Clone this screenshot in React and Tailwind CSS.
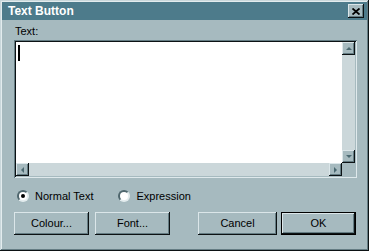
import React from "react";

const raised =
  "shadow-[inset_-1px_-1px_#0c1214,inset_1px_1px_#dbe6e9,inset_-2px_-2px_#647c83]";

function Btn({ w, children, def }) {
  if (def) {
    return (
      <div className={`${w} h-[23px] border border-black p-0`}>
        <div
          className={`w-full h-full flex items-center justify-center bg-[#a6babf] ${raised}`}
        >
          {children}
        </div>
      </div>
    );
  }
  return (
    <div
      className={`${w} h-[23px] flex items-center justify-center bg-[#a6babf] ${raised}`}
    >
      {children}
    </div>
  );
}

function ArrowBtn({ dir }) {
  const pts = {
    up: "1,5 4,2 7,5",
    down: "1,2 4,5 7,2",
    left: "5,1 2,4 5,7",
    right: "2,1 5,4 2,7",
  }[dir];
  return (
    <div
      className={`w-[13px] h-[13px] flex items-center justify-center bg-[#a6babf] shadow-[inset_-1px_-1px_#0c1214,inset_1px_1px_#dbe6e9,inset_-2px_-2px_#647c83]`}
    >
      <svg width="8" height="8" viewBox="0 0 8 8">
        <polygon points={pts} fill="#4b6971" />
      </svg>
    </div>
  );
}

function Radio({ checked }) {
  return (
    <div className="relative w-[12px] h-[12px] rounded-full bg-white border-[2px] border-t-[#4e666d] border-l-[#4e666d] border-b-[#e3ecee] border-r-[#e3ecee]">
      {checked && (
        <div className="absolute left-[2px] top-[2px] w-[4px] h-[4px] rounded-full bg-black" />
      )}
    </div>
  );
}

export default function App() {
  return (
    <div
      className="w-[369px] h-[251px] bg-[#a6babf] text-black flex flex-col shadow-[inset_-1px_-1px_#0c1214,inset_1px_1px_#c9d7db,inset_-2px_-2px_#647c83,inset_2px_2px_#e3ecee]"
      style={{ fontFamily: '"Liberation Sans", Arial, sans-serif' }}
    >
      {/* title bar */}
      <div className="mx-[2px] mt-[2px] h-[18px] bg-[#4d7b8b] flex items-center justify-between pl-[6px] pr-[3px]">
        <span className="text-white font-bold text-[12px] leading-none">
          Text Button
        </span>
        <div
          className={`w-[16px] h-[14px] flex items-center justify-center bg-[#a6babf] ${raised}`}
        >
          <svg width="8" height="7" viewBox="0 0 8 7">
            <path d="M0.5 0.5 L7.5 6.5 M7.5 0.5 L0.5 6.5" stroke="#000" strokeWidth="1.8" />
          </svg>
        </div>
      </div>

      {/* label */}
      <div className="ml-[15px] mt-[4px] h-[14px] text-[11px] leading-[14px]">Text:</div>

      {/* text area */}
      <div className="ml-[14px] mt-[2px] w-[343px] h-[138px] p-[2px] shadow-[inset_1px_1px_#647c83,inset_-1px_-1px_#dfe9ec,inset_2px_2px_#0c1214,inset_-2px_-2px_#a6babf]">
        <div className="flex flex-col w-full h-full">
          <div className="flex h-[121px]">
            <div className="flex-1 bg-white pl-[2px] pt-[3px]">
              <div className="w-[2px] h-[16px] bg-black" />
            </div>
            <div className="w-[13px] flex flex-col bg-[#cbd7da]">
              <ArrowBtn dir="up" />
              <div className="flex-1" />
              <ArrowBtn dir="down" />
            </div>
          </div>
          <div className="flex h-[13px]">
            <div className="flex-1 flex bg-[#cbd7da]">
              <ArrowBtn dir="left" />
              <div className="flex-1" />
              <ArrowBtn dir="right" />
            </div>
            <div className="w-[13px] bg-[#a6babf]" />
          </div>
        </div>
      </div>

      {/* radios */}
      <div className="mt-[11px] h-[14px] flex items-center text-[11px] leading-none">
        <div className="ml-[17px]">
          <Radio checked />
        </div>
        <span className="ml-[6px]">Normal Text</span>
        <div className="ml-[25px]">
          <Radio />
        </div>
        <span className="ml-[6px]">Expression</span>
      </div>

      {/* buttons */}
      <div className="mt-[9px] flex text-[11px] leading-none">
        <div className="ml-[14px]">
          <Btn w="w-[75px]">Colour...</Btn>
        </div>
        <div className="ml-[6px]">
          <Btn w="w-[75px]">Font...</Btn>
        </div>
        <div className="ml-[28px]">
          <Btn w="w-[79px]">Cancel</Btn>
        </div>
        <div className="ml-[4px]">
          <Btn w="w-[75px]" def>
            OK
          </Btn>
        </div>
      </div>
    </div>
  );
}
